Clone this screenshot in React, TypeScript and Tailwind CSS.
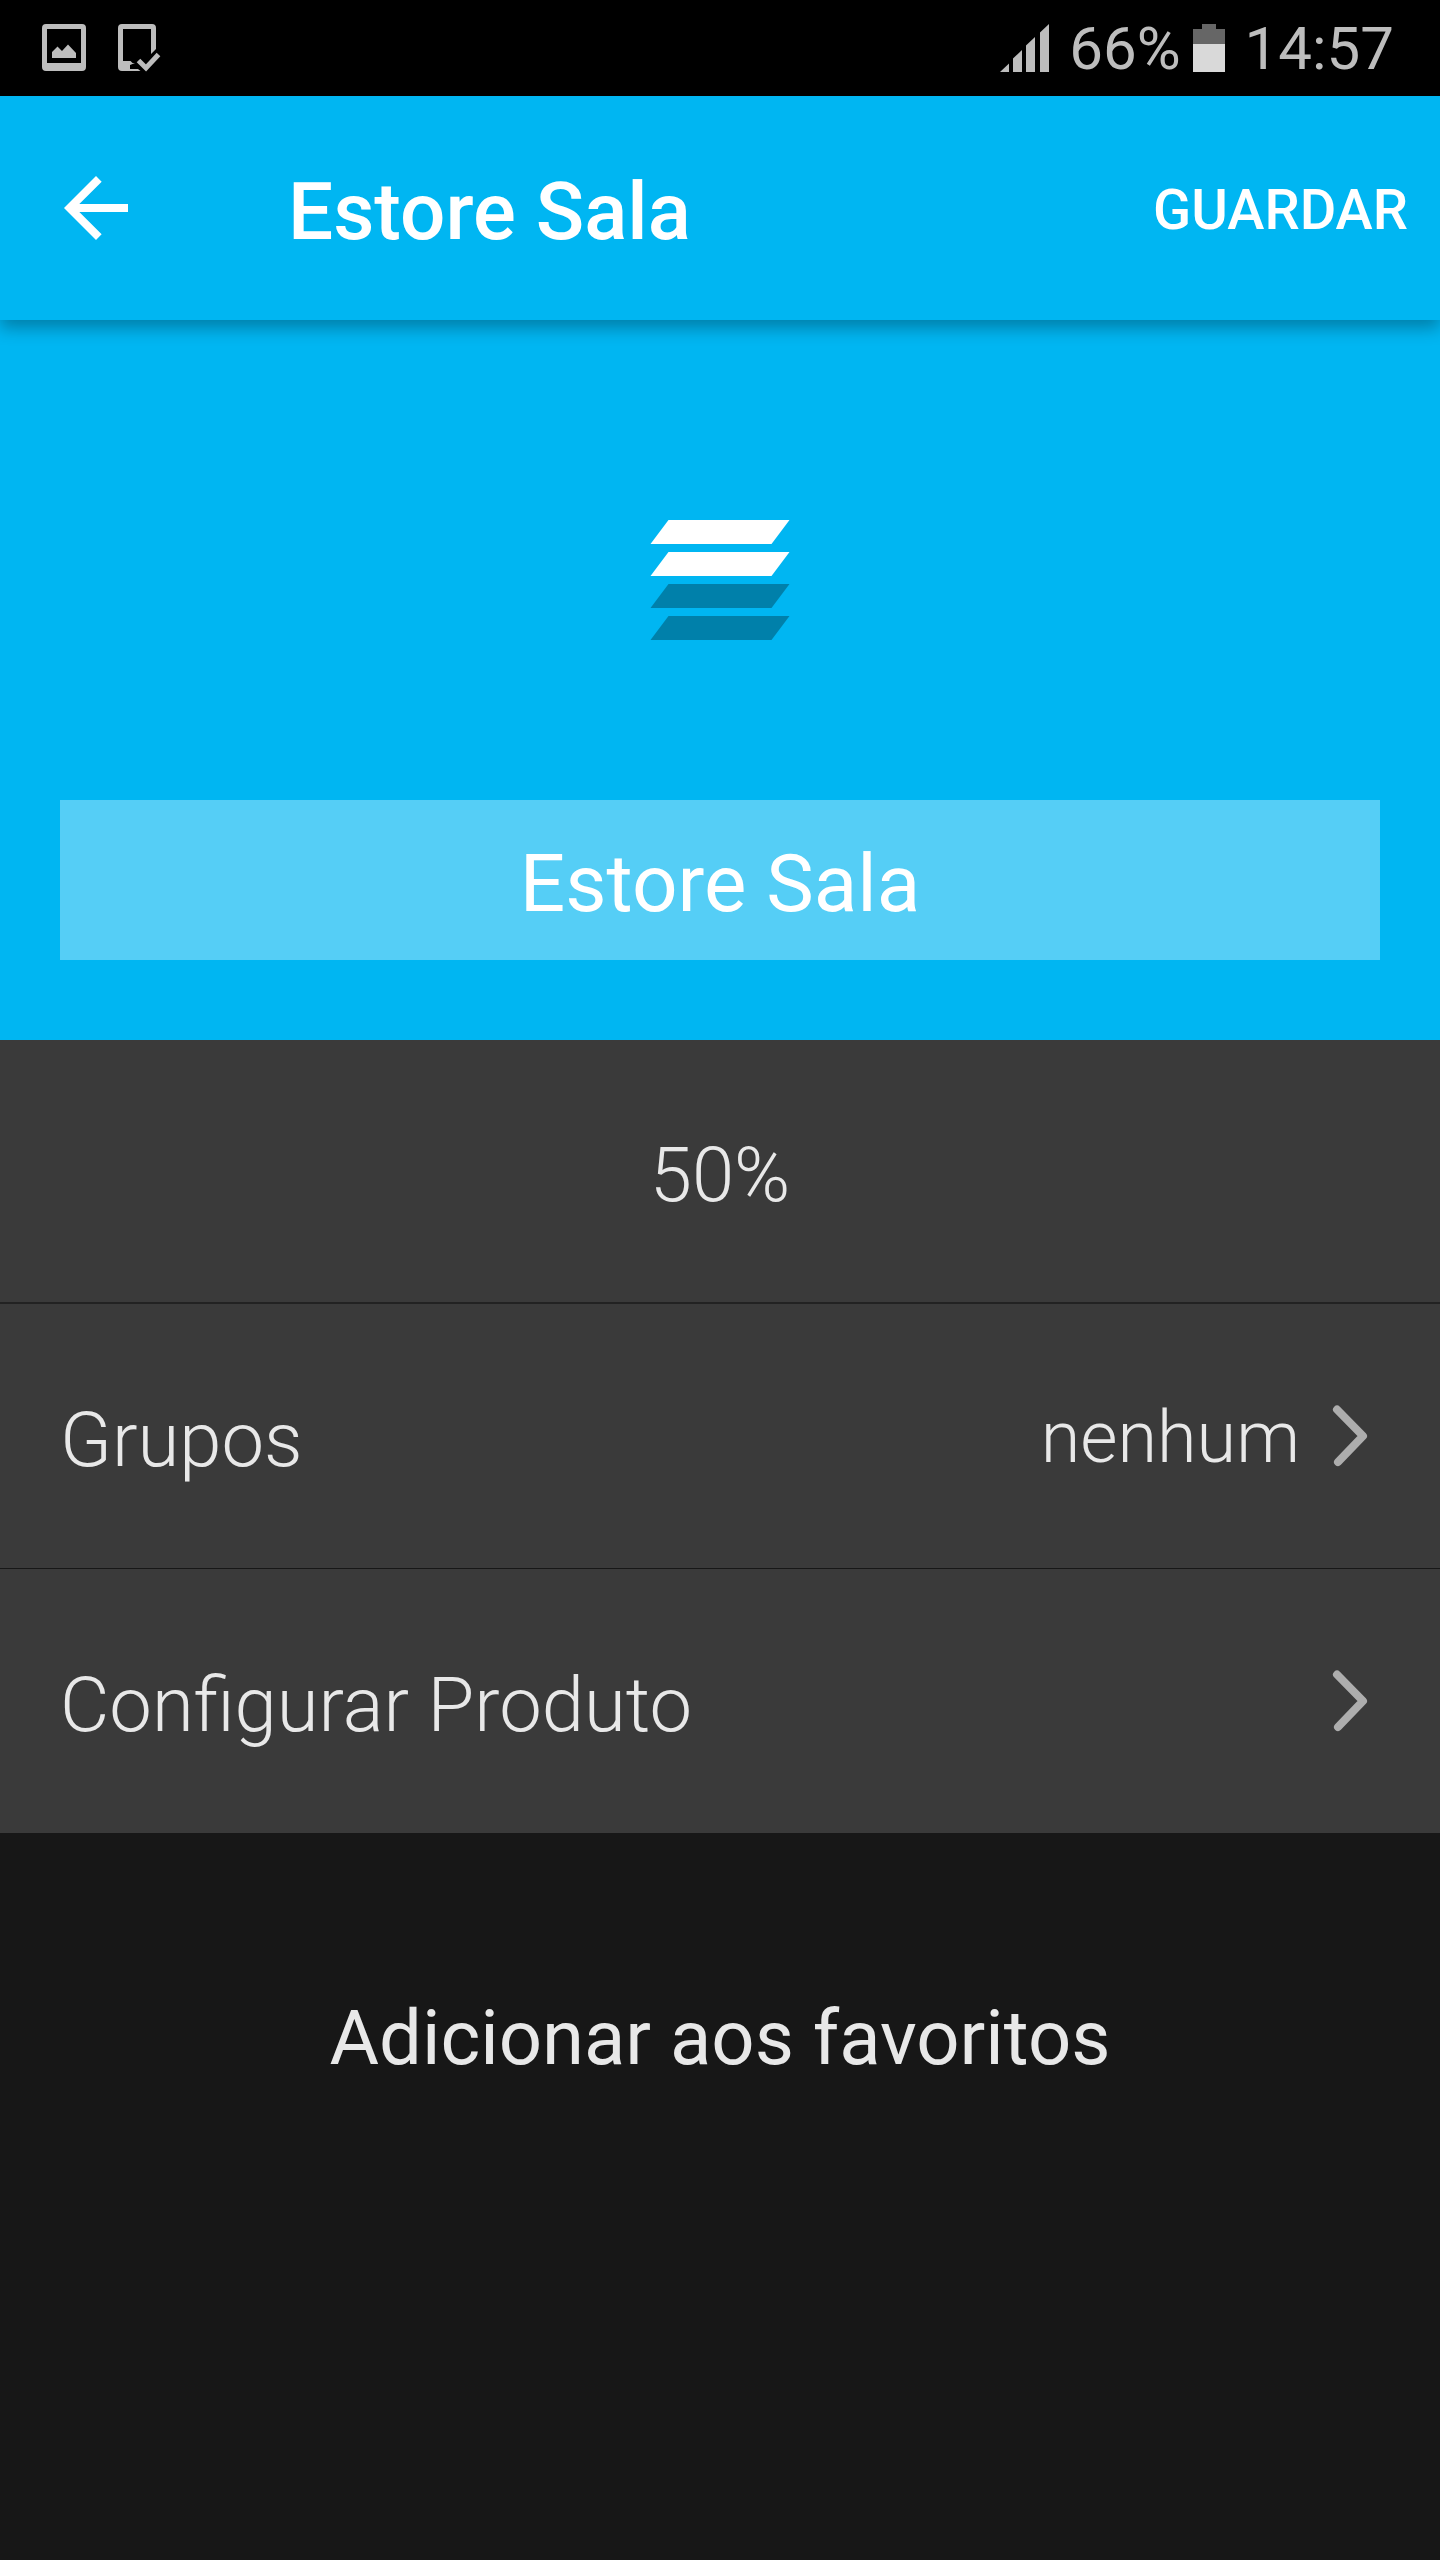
import { useState } from 'react';

interface SettingsRow {
  id: string;
  label: string;
  value?: string;
}

const rows: SettingsRow[] = [
  { id: 'grupos', label: 'Grupos', value: 'nenhum' },
  { id: 'configurar', label: 'Configurar Produto' },
];

function PictureIcon() {
  return (
    <svg width="44" height="48" viewBox="0 0 44 48" aria-hidden="true">
      <path
        fill="#bdbdbd"
        fillRule="evenodd"
        d="M4 0H40Q44 0 44 4V43Q44 47 40 47H4Q0 47 0 43V4Q0 0 4 0ZM5 5V39H39V5Z"
      />
      <path fill="#bdbdbd" d="M10 34V28L15.500 22.500L20 27L26 20.500L34 29V34Z" />
    </svg>
  );
}

function DeviceCheckIcon() {
  return (
    <svg width="44" height="48" viewBox="0 0 44 48" aria-hidden="true">
      <path
        fill="#bdbdbd"
        d="M4 0H34Q38 0 38 4V25L33 30V5H5V37H12.500L14.500 39H17L12 41V45H20L22.500 47H4Q0 47 0 43V4Q0 0 4 0Z"
      />
      <path d="M20.500 36.500L28 44L40.500 30.500" fill="none" stroke="#bdbdbd" strokeWidth="5" />
    </svg>
  );
}

function SignalIcon() {
  return (
    <svg width="49" height="48" viewBox="0 0 49 48" aria-hidden="true" fill="#bdbdbd">
      <path d="M0 48L9 39.500V48Z" />
      <path d="M13 48V34.500L22 26V48Z" />
      <path d="M26 48V21.500L35 13V48Z" />
      <path d="M40 48V8.500L49 0V48Z" />
    </svg>
  );
}

function BatteryIcon() {
  return (
    <svg width="32" height="48" viewBox="0 0 32 48" aria-hidden="true">
      <path d="M9 0H23V5H32V20H0V5H9Z" fill="#666666" />
      <path d="M0 20H32V48H0Z" fill="#d9d9d9" />
    </svg>
  );
}

function BlindIcon() {
  return (
    <svg width="140" height="120" viewBox="0 0 140 120" aria-hidden="true">
      <path d="M18.500 0H139.500L121.500 24H.5Z" fill="#ffffff" />
      <path d="M18.500 32H139.500L121.500 56H.5Z" fill="#ffffff" />
      <path d="M18.500 64H139.500L121.500 88H.5Z" fill="#0080aa" />
      <path d="M18.500 96H139.500L121.500 120H.5Z" fill="#0080aa" />
    </svg>
  );
}

function Chevron() {
  return (
    <svg width="36" height="62" viewBox="0 0 36 62" fill="none" aria-hidden="true">
      <path
        d="M5 4.500L31 31L6 57"
        stroke="#adadad"
        strokeWidth="8"
        strokeLinecap="round"
        strokeLinejoin="round"
      />
    </svg>
  );
}

export default function App() {
  const [name, setName] = useState('Estore Sala');

  return (
    <div className="min-h-screen bg-[#171717] font-['Roboto',sans-serif] text-[#e8e8e8]">
      <div className="flex h-24 items-center justify-between bg-black pr-[46px] pl-[42px] text-[60px] leading-none text-[#bdbdbd]">
        <div className="flex items-center gap-8">
          <PictureIcon />
          <DeviceCheckIcon />
        </div>
        <div className="flex items-center">
          <SignalIcon />
          <span className="ml-5 pt-0.5">66%</span>
          <span className="ml-3">
            <BatteryIcon />
          </span>
          <span className="ml-5 pt-0.5">14:57</span>
        </div>
      </div>

      <header className="relative flex h-56 items-center bg-[#00b6f2] pr-8 pl-12 text-white shadow-[0_8px_16px_rgba(0,0,0,0.3)]">
        <button type="button" aria-label="Voltar">
          <svg width="96" height="96" viewBox="0 0 24 24" fill="currentColor" aria-hidden="true">
            <path d="M20 11H7.830l5.590-5.590L12 4l-8 8 8 8 1.410-1.410L7.830 13H20v-2z" />
          </svg>
        </button>
        <h1 className="ml-36 flex-1 pt-2 text-[80px] leading-none font-medium">Estore Sala</h1>
        <button type="button" className="pt-1 text-[56px] leading-none font-medium">
          GUARDAR
        </button>
      </header>

      <section className="flex flex-col items-center gap-40 bg-[#00b6f2] px-15 pt-50 pb-20">
        <BlindIcon />
        <input
          type="text"
          aria-label="Nome"
          value={name}
          onChange={(e) => setName(e.target.value)}
          className="h-40 w-full bg-[#55cef6] pt-2 text-center text-[80px] text-white outline-none"
        />
      </section>

      <section className="bg-[#3a3a3a] text-[76px] leading-none font-light">
        <div className="flex h-66 items-center justify-center border-b-2 border-[#222222] pt-2">50%</div>
        {rows.map((row) => (
          <button
            key={row.id}
            type="button"
            className="flex h-[265px] w-full items-center border-b border-[#171717] pr-18 pl-15 text-left"
          >
            <span className="flex-1 pt-2">{row.label}</span>
            {row.value && <span className="mr-8 pt-1 text-[72px]">{row.value}</span>}
            <Chevron />
          </button>
        ))}
      </section>

      <div className="flex justify-center pt-40">
        <button type="button" className="px-8 text-[76px] leading-[88px]">
          Adicionar aos favoritos
        </button>
      </div>
    </div>
  );
}
